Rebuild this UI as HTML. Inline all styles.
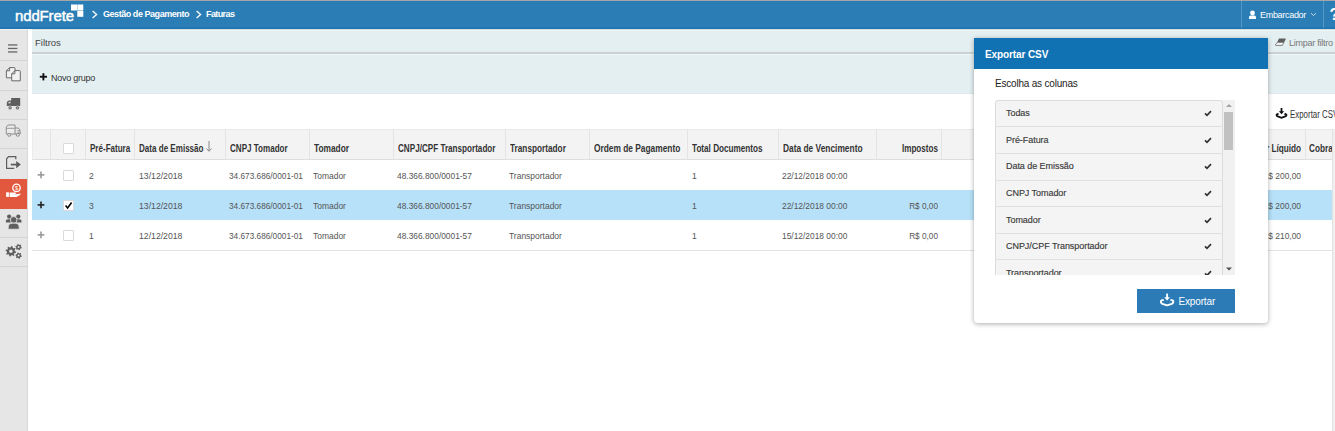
<!DOCTYPE html><html><head><meta charset="utf-8"><style>
*{box-sizing:border-box;margin:0;padding:0}
html,body{width:1335px;height:431px;overflow:hidden;background:#fff;font-family:"Liberation Sans", sans-serif;position:relative}
.a{position:absolute}
.t{position:absolute;white-space:nowrap;line-height:10px;height:10px}
.hcell{position:absolute;top:129px;height:31px;background:#f3f3f3;border-top:1px solid #e8e8e8;border-bottom:1px solid #dedede;border-right:1px solid #e4e4e4}
.th{font-weight:bold;font-size:10px;color:#333;transform-origin:0 0}
.td{font-size:9.5px;color:#555;transform-origin:0 0}
.cb{position:absolute;width:11px;height:11px;border:1px solid #dadada;background:#fff;border-radius:1px}
.sdiv{position:absolute;left:0;width:27px;height:1px;background:#d3d3d3}
.lt{position:absolute;left:10px;font-size:9px;color:#3a3a3a;white-space:nowrap;line-height:10px;letter-spacing:-0.05px;-webkit-text-stroke:0.15px #3a3a3a}
</style></head><body>
<div class="a" style="left:0;top:0;width:1335px;height:1px;background:#a3a7aa"></div>
<div class="a" style="left:0;top:1px;width:1335px;height:28px;background:#2a7db5"></div>
<div class="a" style="left:0;top:27px;width:1335px;height:2px;background:#2076b2"></div>
<div class="t" style="left:15px;top:9px;line-height:14px;height:14px;font-size:15px;color:#fff;letter-spacing:-0.15px;-webkit-text-stroke:0.45px #fff">nddFrete</div>
<svg class="a" style="left:0;top:0" width="300" height="28"><rect x="71" y="4.5" width="6" height="6" fill="#fff"/><rect x="77.3" y="4.5" width="6" height="6" fill="#fff"/><rect x="77.3" y="10.8" width="6" height="6" fill="#fff"/><path d="M92.6 11 L96.6 14.5 L92.6 18" stroke="#fff" stroke-width="1.3" fill="none"/><path d="M196.6 11 L200.6 14.5 L196.6 18" stroke="#fff" stroke-width="1.3" fill="none"/></svg>
<div class="t" style="left:103px;top:9px;font-size:9px;font-weight:bold;color:#fff;letter-spacing:-0.45px">Gestão de Pagamento</div>
<div class="t" style="left:206px;top:9px;font-size:9px;font-weight:bold;color:#fff;letter-spacing:-0.6px">Faturas</div>
<div class="a" style="left:1241px;top:1px;width:1px;height:27px;background:#5596c6"></div>
<div class="a" style="left:1323px;top:1px;width:1px;height:27px;background:#5596c6"></div>
<svg class="a" style="left:1240px;top:0" width="95" height="28"><circle cx="1252.5" cy="13" r="2.4" fill="#fff" transform="translate(-1240 0)"/><path d="M9 19 L9 17.2 Q9 15.6 10.6 15.6 L14.4 15.6 Q16 15.6 16 17.2 L16 19 Z" fill="#fff"/><path d="M71 13.2 L73.5 15.6 L76 13.2" stroke="#d5e6f2" stroke-width="0.9" fill="none"/></svg>
<div class="t" style="left:1260px;top:10px;font-size:9px;color:#fff;letter-spacing:-0.3px">Embarcador</div>
<div class="t" style="left:1329.5px;top:6.5px;line-height:16px;height:16px;font-size:16px;font-weight:bold;color:#fff">?</div>
<div class="a" style="left:0;top:29px;width:28px;height:402px;background:#e6e6e6;border-right:1px solid #d8d8d8"></div><div class="a" style="left:0;top:29px;width:32px;height:1px;background:#f3efed"></div>
<div class="sdiv" style="top:60px"></div>
<div class="sdiv" style="top:90px"></div>
<div class="sdiv" style="top:119px"></div>
<div class="sdiv" style="top:148px"></div>
<div class="sdiv" style="top:237px"></div>
<div class="sdiv" style="top:266px"></div>
<div class="a" style="left:0;top:179px;width:27px;height:29.5px;background:#e2583e"></div>
<svg class="a" style="left:0;top:0" width="27" height="431"><rect x="8" y="44.3" width="9.4" height="1.3" fill="#666"/><rect x="8" y="47.8" width="9.4" height="1.3" fill="#666"/><rect x="8" y="51.3" width="9.4" height="1.3" fill="#666"/><path d="M9.6 67.6 L14.4 67.6 Q15 67.6 15 68.2 L15 77.8 L6.4 77.8 L6.4 70.8 Z" fill="#f2f2f2" stroke="#6a6a6a" stroke-width="1" stroke-linejoin="round"/><path d="M6.4 70.8 L9.6 70.8 L9.6 67.6" fill="none" stroke="#6a6a6a" stroke-width="1"/><path d="M14.9 70.6 L19.7 70.6 Q20.3 70.6 20.3 71.2 L20.3 80.8 L11.7 80.8 L11.7 73.8 Z" fill="#f2f2f2" stroke="#6a6a6a" stroke-width="1" stroke-linejoin="round"/><path d="M11.7 73.8 L14.9 73.8 L14.9 70.6" fill="none" stroke="#6a6a6a" stroke-width="1"/><path d="M6.8 106 L6.8 103.6 Q6.8 100.6 9.6 100.6 L11.2 100.6 L11.2 98 L20.2 98 L20.2 106 Z" fill="#5e5e5e"/><path d="M8.1 103.2 Q8.3 101.7 9.8 101.7 L10.5 101.7 L10.5 103.2 Z" fill="#e6e6e6"/><circle cx="10.1" cy="107.8" r="1.9" fill="#5e5e5e" stroke="#e6e6e6" stroke-width="0.6"/><circle cx="17.5" cy="107.8" r="1.9" fill="#5e5e5e" stroke="#e6e6e6" stroke-width="0.6"/><circle cx="10.1" cy="107.8" r="0.6" fill="#e6e6e6"/><circle cx="17.5" cy="107.8" r="0.6" fill="#e6e6e6"/><path d="M6.3 134 L6.3 126.8 L8 125 L15 125 L15 134 Z" fill="#ececec" stroke="#858585" stroke-width="0.9"/><path d="M6.5 128.3 L14.5 128.3" stroke="#858585" stroke-width="0.8"/><path d="M15 128 L18.3 128 Q20.2 129.5 20.2 131.5 L20.2 134 L15 134" fill="none" stroke="#858585" stroke-width="0.9"/><path d="M17.5 130.5 L20 130.5 M17.5 132.2 L20 132.2" stroke="#858585" stroke-width="0.7"/><circle cx="9.2" cy="134.8" r="1.5" fill="#e6e6e6" stroke="#858585" stroke-width="0.9"/><circle cx="17.8" cy="134.8" r="1.5" fill="#e6e6e6" stroke="#858585" stroke-width="0.9"/><path d="M15.8 159.3 L15.8 156.6 L8.6 156.6 L6.6 158.8 L6.6 168.4 L14.2 168.4" fill="none" stroke="#5e5e5e" stroke-width="1.2"/><path d="M10.8 164.6 L16.5 164.6" stroke="#5a5a5a" stroke-width="1.7"/><path d="M16.2 161 L20.8 164.6 L16.2 168.2 Z" fill="#5a5a5a"/><circle cx="16.5" cy="187.9" r="3.7" fill="none" stroke="#fff" stroke-width="1.3"/><text x="16.5" y="190.1" font-size="5.6" fill="#fff" text-anchor="middle" font-family="Liberation Sans">$</text><rect x="6.1" y="192.3" width="2.8" height="4.6" fill="#fff"/><path d="M9.6 192.6 L15.5 192.6 Q16.3 193.3 15.5 194 L13 194 L16 194.3 L20.6 193.4 Q20.7 194.6 19.6 195.2 L16.6 197 L9.6 197 Z" fill="#fff"/><circle cx="9.1" cy="216.6" r="2.1" fill="#5e5e5e"/><circle cx="18.3" cy="216.6" r="2.1" fill="#5e5e5e"/><path d="M5.9 222.6 L5.9 221 Q5.9 219.3 7.8 219.3 L10.8 219.3 L10.8 222.6 Z" fill="#5e5e5e"/><path d="M21.5 222.6 L21.5 221 Q21.5 219.3 19.6 219.3 L16.6 219.3 L16.6 222.6 Z" fill="#5e5e5e"/><circle cx="13.7" cy="219.9" r="3.3" fill="#5e5e5e" stroke="#e6e6e6" stroke-width="0.8"/><path d="M8.2 229.2 L8.2 227 Q8.2 223.2 12 223.2 L15.4 223.2 Q19.2 223.2 19.2 227 L19.2 229.2 Z" fill="#5e5e5e" stroke="#e6e6e6" stroke-width="0.8"/></svg>
<svg class="a" style="left:0;top:0" width="27" height="431"><path d="M16.17,251.82 L15.97,252.84 L14.34,253.14 L13.91,253.77 L14.26,255.40 L13.40,255.97 L12.03,255.03 L11.28,255.18 L10.38,256.57 L9.36,256.37 L9.06,254.74 L8.43,254.31 L6.80,254.66 L6.23,253.80 L7.17,252.43 L7.02,251.68 L5.63,250.78 L5.83,249.76 L7.46,249.46 L7.89,248.83 L7.54,247.20 L8.40,246.63 L9.77,247.57 L10.52,247.42 L11.42,246.03 L12.44,246.23 L12.74,247.86 L13.37,248.29 L15.00,247.94 L15.57,248.80 L14.63,250.17 L14.78,250.92 Z M12.700000000000001,251.3 A1.8,1.8 0 1,0 9.1,251.3 A1.8,1.8 0 1,0 12.700000000000001,251.3 Z" fill="#5e5e5e" fill-rule="evenodd"/><path d="M21.77,247.52 L21.56,248.32 L20.50,248.56 L20.06,249.00 L19.82,250.06 L19.02,250.27 L18.29,249.48 L17.68,249.32 L16.65,249.64 L16.06,249.05 L16.38,248.02 L16.22,247.41 L15.43,246.68 L15.64,245.88 L16.70,245.64 L17.14,245.20 L17.38,244.14 L18.18,243.93 L18.91,244.72 L19.52,244.88 L20.55,244.56 L21.14,245.15 L20.82,246.18 L20.98,246.79 Z M19.6,247.1 A1.0,1.0 0 1,0 17.6,247.1 A1.0,1.0 0 1,0 19.6,247.1 Z" fill="#5e5e5e" fill-rule="evenodd"/><path d="M21.77,256.02 L21.56,256.82 L20.50,257.06 L20.06,257.50 L19.82,258.56 L19.02,258.77 L18.29,257.98 L17.68,257.82 L16.65,258.14 L16.06,257.55 L16.38,256.52 L16.22,255.91 L15.43,255.18 L15.64,254.38 L16.70,254.14 L17.14,253.70 L17.38,252.64 L18.18,252.43 L18.91,253.22 L19.52,253.38 L20.55,253.06 L21.14,253.65 L20.82,254.68 L20.98,255.29 Z M19.6,255.6 A1.0,1.0 0 1,0 17.6,255.6 A1.0,1.0 0 1,0 19.6,255.6 Z" fill="#5e5e5e" fill-rule="evenodd"/></svg>
<div class="a" style="left:32px;top:29px;width:1303px;height:65px;background:#e4eff1"></div>
<div class="a" style="left:32px;top:29px;width:1303px;height:1px;background:#d8dcdd"></div>
<div class="a" style="left:32px;top:30px;width:1303px;height:1px;background:#ebf6f9"></div>
<div class="a" style="left:32px;top:93px;width:1303px;height:1px;background:#dde9ef"></div>
<div class="a" style="left:32px;top:52px;width:1303px;height:2px;background:#cbd1d3"></div>
<div class="a" style="left:32px;top:54px;width:1303px;height:1px;background:#edf6f8"></div>
<div class="t" style="left:35px;top:38px;font-size:9.5px;color:#444">Filtros</div>
<svg class="a" style="left:39px;top:73px" width="9" height="9"><rect x="0.8" y="2.8" width="7.2" height="1.9" fill="#111"/><rect x="3.45" y="0.2" width="1.9" height="7.2" fill="#111"/></svg>
<div class="t" style="left:51px;top:73px;font-size:9px;color:#333;letter-spacing:-0.25px">Novo grupo</div>
<svg class="a" style="left:1274px;top:37px" width="13" height="10"><path d="M5 1.6 L11.2 1.6 Q12 1.6 11.6 2.4 L10.2 5.2 L3.2 5.2 Z" fill="#5f5f5f"/><path d="M3.2 5.4 L9.9 5.4 L8.3 8.4 L2 8.4 Q1.1 8.4 1.5 7.6 Z" fill="#f4f7f8" stroke="#666" stroke-width="0.8"/></svg>
<div class="t" style="left:1289px;top:38px;font-size:9px;color:#777;letter-spacing:-0.25px">Limpar filtro</div>
<svg class="a" style="left:1274px;top:106px" width="16" height="14"><path d="M7.5 2 L7.5 6" stroke="#111" stroke-width="1.8"/><path d="M4.8 5.2 L10.2 5.2 L7.5 8.2 Z" fill="#111"/><path d="M4.5 7.6 L2.6 8.6 Q2.3 9.6 3.2 10.2 L7.5 11.8 L11.8 10.2 Q12.7 9.6 12.4 8.6 L10.5 7.6" fill="none" stroke="#111" stroke-width="1.8"/></svg>
<div class="t" style="left:1290px;top:109.5px;font-size:10px;color:#333;transform:scaleX(0.79);transform-origin:0 0">Exportar CSV</div>
<div class="hcell" style="left:32px;width:19px;border-left:1px solid #ececec;"></div>
<div class="hcell" style="left:51px;width:35px;"></div>
<div class="hcell" style="left:86px;width:49px;"></div>
<div class="hcell" style="left:135px;width:91px;"></div>
<div class="hcell" style="left:226px;width:84px;"></div>
<div class="hcell" style="left:310px;width:84px;"></div>
<div class="hcell" style="left:394px;width:112px;"></div>
<div class="hcell" style="left:506px;width:84px;"></div>
<div class="hcell" style="left:590px;width:98px;"></div>
<div class="hcell" style="left:688px;width:91px;"></div>
<div class="hcell" style="left:779px;width:98px;"></div>
<div class="hcell" style="left:877px;width:65px;"></div>
<div class="hcell" style="left:942px;width:364px;"></div>
<div class="hcell" style="left:1306px;width:94px;"></div>
<div class="cb" style="left:63px;top:143px"></div>
<svg class="a" style="left:205px;top:140px" width="8" height="13"><path d="M4 1 L4 11" stroke="#888" stroke-width="1"/><path d="M1.5 8.5 L4 11.3 L6.5 8.5" stroke="#888" stroke-width="1" fill="none"/></svg>
<div class="t th" style="left:90px;top:144px;transform:scaleX(0.804)">Pré-Fatura</div>
<div class="t th" style="left:139px;top:144px;transform:scaleX(0.806)">Data de Emissão</div>
<div class="t th" style="left:229.5px;top:144px;transform:scaleX(0.806)">CNPJ Tomador</div>
<div class="t th" style="left:314px;top:144px;transform:scaleX(0.833)">Tomador</div>
<div class="t th" style="left:397.5px;top:144px;transform:scaleX(0.812)">CNPJ/CPF Transportador</div>
<div class="t th" style="left:510px;top:144px;transform:scaleX(0.824)">Transportador</div>
<div class="t th" style="left:593.5px;top:144px;transform:scaleX(0.835)">Ordem de Pagamento</div>
<div class="t th" style="left:692px;top:144px;transform:scaleX(0.816)">Total Documentos</div>
<div class="t th" style="left:782.5px;top:144px;transform:scaleX(0.837)">Data de Vencimento</div>
<div class="t th" style="left:838px;top:144px;width:100px;text-align:right;transform:scaleX(0.811);transform-origin:100% 0">Impostos</div>
<div class="t th" style="left:1201px;top:144px;width:100px;text-align:right;transform:scaleX(0.82);transform-origin:100% 0">Valor Líquido</div>
<div class="t th" style="left:1309px;top:144px;transform:scaleX(0.82)">Cobra</div>
<div class="a" style="left:32px;top:160px;width:1303px;height:30px;background:#fff"></div>
<svg class="a" style="left:37px;top:171px" width="8" height="8"><rect x="0.6" y="3.1" width="6.8" height="1.6" fill="#9a9a9a"/><rect x="3.2" y="0.5" width="1.6" height="6.8" fill="#9a9a9a"/></svg>
<div class="cb" style="left:63px;top:170px"></div>
<div class="t td" style="left:89px;top:170.5px;transform:scaleX(0.9)">2</div>
<div class="t td" style="left:139px;top:170.5px;transform:scaleX(0.913)">13/12/2018</div>
<div class="t td" style="left:229px;top:170.5px;transform:scaleX(0.869)">34.673.686/0001-01</div>
<div class="t td" style="left:313px;top:170.5px;transform:scaleX(0.89)">Tomador</div>
<div class="t td" style="left:397px;top:170.5px;transform:scaleX(0.881)">48.366.800/0001-57</div>
<div class="t td" style="left:509px;top:170.5px;transform:scaleX(0.892)">Transportador</div>
<div class="t td" style="left:692px;top:170.5px;transform:scaleX(0.9)">1</div>
<div class="t td" style="left:782px;top:170.5px;transform:scaleX(0.884)">22/12/2018 00:00</div>
<div class="t td" style="left:1201px;top:170.5px;width:100px;text-align:right;transform:scaleX(0.884);transform-origin:100% 0">R$ 200,00</div>
<div class="a" style="left:32px;top:190px;width:1303px;height:30px;background:#b7e1f9"></div>
<svg class="a" style="left:37px;top:201px" width="8" height="8"><rect x="0.6" y="3.1" width="6.8" height="1.6" fill="#222"/><rect x="3.2" y="0.5" width="1.6" height="6.8" fill="#222"/></svg>
<div class="cb" style="left:63px;top:200px"></div>
<svg class="a" style="left:63px;top:200px" width="11" height="11"><path d="M2.6 5.6 L4.6 8 L8.6 2.6" stroke="#000" stroke-width="1.6" fill="none"/></svg>
<div class="t td" style="left:89px;top:200.5px;transform:scaleX(0.9)">3</div>
<div class="t td" style="left:139px;top:200.5px;transform:scaleX(0.913)">13/12/2018</div>
<div class="t td" style="left:229px;top:200.5px;transform:scaleX(0.869)">34.673.686/0001-01</div>
<div class="t td" style="left:313px;top:200.5px;transform:scaleX(0.89)">Tomador</div>
<div class="t td" style="left:397px;top:200.5px;transform:scaleX(0.881)">48.366.800/0001-57</div>
<div class="t td" style="left:509px;top:200.5px;transform:scaleX(0.892)">Transportador</div>
<div class="t td" style="left:692px;top:200.5px;transform:scaleX(0.9)">1</div>
<div class="t td" style="left:782px;top:200.5px;transform:scaleX(0.884)">22/12/2018 00:00</div>
<div class="t td" style="left:838px;top:200.5px;width:100px;text-align:right;transform:scaleX(0.867);transform-origin:100% 0">R$ 0,00</div>
<div class="t td" style="left:1201px;top:200.5px;width:100px;text-align:right;transform:scaleX(0.884);transform-origin:100% 0">R$ 200,00</div>
<div class="a" style="left:32px;top:220px;width:1303px;height:30px;background:#fff"></div>
<svg class="a" style="left:37px;top:231px" width="8" height="8"><rect x="0.6" y="3.1" width="6.8" height="1.6" fill="#9a9a9a"/><rect x="3.2" y="0.5" width="1.6" height="6.8" fill="#9a9a9a"/></svg>
<div class="cb" style="left:63px;top:230px"></div>
<div class="t td" style="left:89px;top:230.5px;transform:scaleX(0.9)">1</div>
<div class="t td" style="left:139px;top:230.5px;transform:scaleX(0.913)">12/12/2018</div>
<div class="t td" style="left:229px;top:230.5px;transform:scaleX(0.869)">34.673.686/0001-01</div>
<div class="t td" style="left:313px;top:230.5px;transform:scaleX(0.89)">Tomador</div>
<div class="t td" style="left:397px;top:230.5px;transform:scaleX(0.881)">48.366.800/0001-57</div>
<div class="t td" style="left:509px;top:230.5px;transform:scaleX(0.892)">Transportador</div>
<div class="t td" style="left:692px;top:230.5px;transform:scaleX(0.9)">1</div>
<div class="t td" style="left:782px;top:230.5px;transform:scaleX(0.884)">15/12/2018 00:00</div>
<div class="t td" style="left:838px;top:230.5px;width:100px;text-align:right;transform:scaleX(0.867);transform-origin:100% 0">R$ 0,00</div>
<div class="t td" style="left:1201px;top:230.5px;width:100px;text-align:right;transform:scaleX(0.884);transform-origin:100% 0">R$ 210,00</div>
<div class="a" style="left:32px;top:250px;width:1303px;height:1px;background:#e3e3e3"></div>
<div class="a" style="left:1332px;top:129px;width:3px;height:302px;background:#f0f0f0;border-left:1px solid #e2e2e2"></div>
<div class="a" style="left:974px;top:38px;width:294px;height:285px;background:#fff;border-radius:0 0 4px 4px;box-shadow:0 1px 5px rgba(0,0,0,.33)">
<div class="a" style="left:0;top:0;width:294px;height:30.5px;background:#1172b3"></div>
<div class="t" style="left:11px;top:12px;font-size:10px;font-weight:bold;color:#fff;letter-spacing:-0.1px">Exportar CSV</div>
<div class="t" style="left:21px;top:40.5px;font-size:10px;color:#222;letter-spacing:-0.2px">Escolha as colunas</div>
<div class="a" style="left:21px;top:62px;width:228px;height:174.6px;overflow:hidden;border:1px solid #dcdcdc;border-bottom:none;border-radius:3px 3px 0 0;background:#f4f4f4">
<div class="a" style="left:0;top:-0.16px;width:226px;height:26.56px;border-bottom:1px solid #e0e0e0"><div class="lt" style="top:7.5px">Todas</div><svg class="a" style="left:207.5px;top:9.5px" width="9" height="8"><path d="M1 3.4 L3 5.4 L7 1.2" stroke="#333" stroke-width="1.7" fill="none"/></svg></div>
<div class="a" style="left:0;top:26.40px;width:226px;height:26.56px;border-bottom:1px solid #e0e0e0"><div class="lt" style="top:7.5px">Pré-Fatura</div><svg class="a" style="left:207.5px;top:9.5px" width="9" height="8"><path d="M1 3.4 L3 5.4 L7 1.2" stroke="#333" stroke-width="1.7" fill="none"/></svg></div>
<div class="a" style="left:0;top:52.96px;width:226px;height:26.56px;border-bottom:1px solid #e0e0e0"><div class="lt" style="top:7.5px">Data de Emissão</div><svg class="a" style="left:207.5px;top:9.5px" width="9" height="8"><path d="M1 3.4 L3 5.4 L7 1.2" stroke="#333" stroke-width="1.7" fill="none"/></svg></div>
<div class="a" style="left:0;top:79.52px;width:226px;height:26.56px;border-bottom:1px solid #e0e0e0"><div class="lt" style="top:7.5px">CNPJ Tomador</div><svg class="a" style="left:207.5px;top:9.5px" width="9" height="8"><path d="M1 3.4 L3 5.4 L7 1.2" stroke="#333" stroke-width="1.7" fill="none"/></svg></div>
<div class="a" style="left:0;top:106.08px;width:226px;height:26.56px;border-bottom:1px solid #e0e0e0"><div class="lt" style="top:7.5px">Tomador</div><svg class="a" style="left:207.5px;top:9.5px" width="9" height="8"><path d="M1 3.4 L3 5.4 L7 1.2" stroke="#333" stroke-width="1.7" fill="none"/></svg></div>
<div class="a" style="left:0;top:132.64px;width:226px;height:26.56px;border-bottom:1px solid #e0e0e0"><div class="lt" style="top:7.5px">CNPJ/CPF Transportador</div><svg class="a" style="left:207.5px;top:9.5px" width="9" height="8"><path d="M1 3.4 L3 5.4 L7 1.2" stroke="#333" stroke-width="1.7" fill="none"/></svg></div>
<div class="a" style="left:0;top:159.20px;width:226px;height:26.56px;border-bottom:1px solid #e0e0e0"><div class="lt" style="top:7.5px">Transportador</div><svg class="a" style="left:207.5px;top:9.5px" width="9" height="8"><path d="M1 3.4 L3 5.4 L7 1.2" stroke="#333" stroke-width="1.7" fill="none"/></svg></div>
<div class="a" style="left:0;top:185.76px;width:226px;height:26.56px;border-bottom:1px solid #e0e0e0"><div class="lt" style="top:7.5px">Ordem de Pagamento</div><svg class="a" style="left:207.5px;top:9.5px" width="9" height="8"><path d="M1 3.4 L3 5.4 L7 1.2" stroke="#333" stroke-width="1.7" fill="none"/></svg></div>
</div>
<div class="a" style="left:249px;top:62px;width:12px;height:174.6px;background:#f1f1f1"></div>
<svg class="a" style="left:249px;top:62px" width="12" height="175"><path d="M3 7 L6 4 L9 7 Z" fill="#a3a3a3"/><path d="M3 167.6 L6 170.6 L9 167.6 Z" fill="#505050"/></svg>
<div class="a" style="left:250px;top:74px;width:9px;height:38px;background:#c1c1c1"></div>
<div class="a" style="left:163px;top:251px;width:98px;height:24px;background:#2d7bb6"></div>
<svg class="a" style="left:185px;top:255px" width="17" height="14"><path d="M8.1 0.6 L8.1 5" stroke="#fff" stroke-width="1.9"/><path d="M5.2 4.2 L11 4.2 L8.1 7.6 Z" fill="#fff"/><path d="M4.8 6.9 L2.6 7.4 Q1.7 7.9 1.9 9 Q2.1 10.2 3.4 10.8 L8.1 12.3 L12.8 10.8 Q14.1 10.2 14.3 9 Q14.5 7.9 13.6 7.4 L11.4 6.9" fill="none" stroke="#fff" stroke-width="1.9" stroke-linejoin="round"/></svg>
<div class="t" style="left:204.5px;top:259px;font-size:10px;color:#fff;letter-spacing:-0.15px">Exportar</div>
</div>
</body></html>
